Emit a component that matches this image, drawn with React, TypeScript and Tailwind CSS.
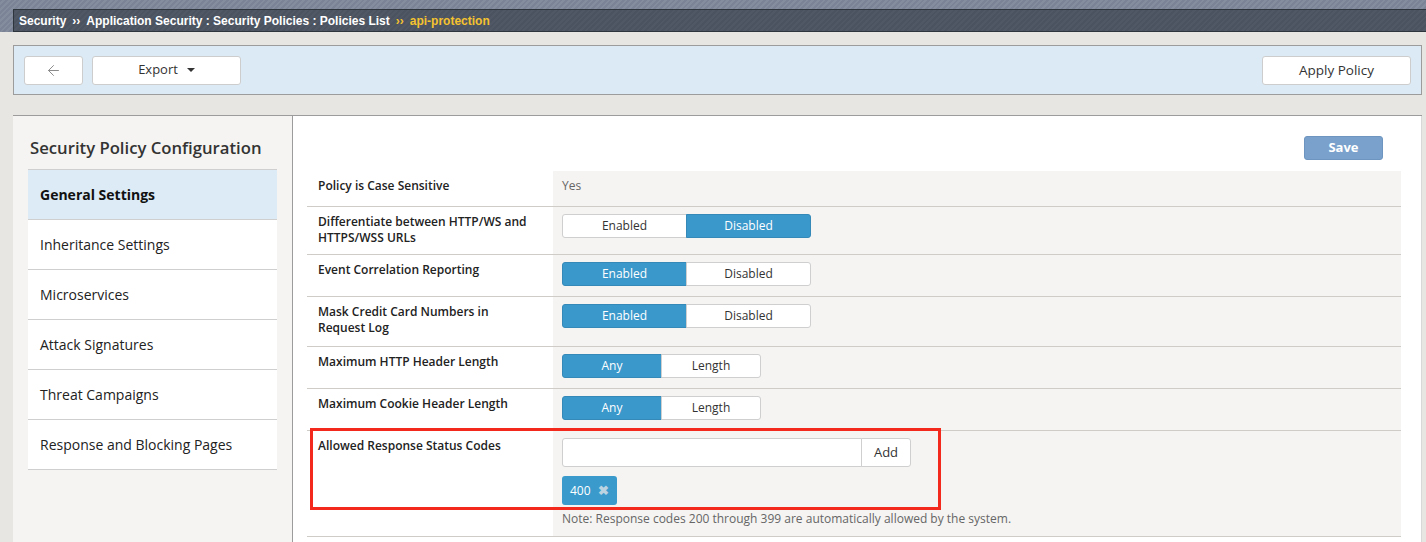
import { ArrowLeft } from "lucide-react";

const menu = [
  { label: "General Settings", active: true },
  { label: "Inheritance Settings" },
  { label: "Microservices" },
  { label: "Attack Signatures" },
  { label: "Threat Campaigns" },
  { label: "Response and Blocking Pages" },
];

type Row = {
  label: string;
  height: string;
  options?: string[];
  active?: number;
  wide?: boolean;
  text?: string;
};

const rows: Row[] = [
  { label: "Policy is Case Sensitive", height: "h-[35px]", text: "Yes" },
  {
    label: "Differentiate between HTTP/WS and HTTPS/WSS URLs",
    height: "h-[48px]",
    options: ["Enabled", "Disabled"],
    active: 1,
    wide: true,
  },
  {
    label: "Event Correlation Reporting",
    height: "h-[42px]",
    options: ["Enabled", "Disabled"],
    active: 0,
    wide: true,
  },
  {
    label: "Mask Credit Card Numbers in Request Log",
    height: "h-[50px]",
    options: ["Enabled", "Disabled"],
    active: 0,
    wide: true,
  },
  {
    label: "Maximum HTTP Header Length",
    height: "h-[42px]",
    options: ["Any", "Length"],
    active: 0,
  },
  {
    label: "Maximum Cookie Header Length",
    height: "h-[42px]",
    options: ["Any", "Length"],
    active: 0,
  },
];

function Toggle({ options, active, wide }: { options: string[]; active: number; wide?: boolean }) {
  return (
    <div className="flex">
      {options.map((opt, i) => (
        <div
          key={opt}
          className={`h-[24px] flex items-center justify-center text-[12px] border ${
            wide ? "w-[125px]" : "w-[100px]"
          } ${i === 0 ? "rounded-l-[3px]" : "rounded-r-[3px] -ml-px"} ${
            i === active
              ? "bg-[#3a98cb] border-[#3589b8] text-white"
              : "bg-white border-[#cfcfcf] text-[#333]"
          }`}
        >
          {opt}
        </div>
      ))}
    </div>
  );
}

export default function App() {
  return (
    <div className="w-[1426px] h-[542px] overflow-hidden bg-[#e8e6e2] font-['Open_Sans',sans-serif] text-[#222]">
      {/* breadcrumb */}
      <div className="h-[32px] pt-[9px] pl-[13px] bg-[repeating-linear-gradient(135deg,#7a8496_0px,#7a8496_2px,#838d9e_2px,#838d9e_4px)]">
        <div className="h-[23px] border border-[#2f353d] border-r-0 bg-[repeating-linear-gradient(135deg,#4a535f_0px,#4a535f_2px,#4f5864_2px,#4f5864_4px)] flex items-center pl-[5px] font-['Liberation_Sans',Arial,sans-serif] font-bold text-[12px] text-white">
          <span>Security</span>
          <span className="mx-[6px]">››</span>
          <span>Application Security : Security Policies : Policies List</span>
          <span className="mx-[6px] text-[#f5c230]">››</span>
          <span className="text-[#f5c230]">api-protection</span>
        </div>
      </div>

      {/* toolbar */}
      <div className="mt-[13px] ml-[13px] mr-[4px] h-[50px] border border-[#9c9c9c] bg-[#dbeaf5] flex items-center justify-between px-[10px]">
        <div className="flex gap-[9px]">
          <div className="w-[59px] h-[29px] bg-white border border-[#cdcdcd] rounded-[3px] flex items-center justify-center text-[#8a8a8a]">
            <ArrowLeft size={17} strokeWidth={1.4} />
          </div>
          <div className="w-[149px] h-[29px] bg-white border border-[#cdcdcd] rounded-[3px] flex items-center justify-center text-[13px] text-[#333]">
            Export
            <span className="ml-[9px] w-0 h-0 border-l-[4px] border-r-[4px] border-t-[4px] border-l-transparent border-r-transparent border-t-[#333]" />
          </div>
        </div>
        <div className="w-[149px] h-[29px] bg-white border border-[#cdcdcd] rounded-[3px] flex items-center justify-center text-[13.5px] text-[#333]">
          Apply Policy
        </div>
      </div>

      {/* main */}
      <div className="mt-[20px] ml-[13px] mr-[4px] h-[430px] border-t border-[#9c9c9c] flex">
        <div className="w-[280px] shrink-0 bg-[#f5f4f2] border-r border-[#9c9c9c] px-[15px] pt-[21px]">
          <div className="pl-[2px] text-[16.7px] font-semibold text-[#333] leading-[22px] mb-[10px]">
            Security Policy Configuration
          </div>
          <div className="border-t border-[#cfcfcf]">
            {menu.map((m) => (
              <div
                key={m.label}
                className={`h-[50px] border-b border-[#cfcfcf] flex items-center pl-[12px] text-[14px] ${
                  m.active ? "bg-[#dcebf6] font-bold text-[#111]" : "bg-white text-[#222]"
                }`}
              >
                {m.label}
              </div>
            ))}
          </div>
        </div>

        <div className="flex-1 bg-white border-r border-[#d8d8d8] pl-[14px] pr-[20px] pt-[20px]">
          <div className="flex justify-end pr-[18px]">
            <div className="w-[79px] h-[24px] bg-[#7aa1cc] border border-[#6e95c0] rounded-[3px] text-white text-[13px] font-bold flex items-center justify-center">
              Save
            </div>
          </div>

          <div className="mt-[11px]">
            {rows.map((r, idx) => (
              <div key={idx} className={`flex ${r.height} ${idx > 0 ? "border-t border-[#cfccc8]" : ""}`}>
                <div className="w-[246px] shrink-0 pl-[11px] pr-[20px] pt-[7px] text-[12px] font-semibold leading-[16px] text-[#222]">
                  {r.label}
                </div>
                <div className="flex-1 bg-[#f5f4f2] pl-[9px] pt-[7px]">
                  {r.text ? (
                    <div className="text-[12px] text-[#666] leading-[16px]">{r.text}</div>
                  ) : (
                    <Toggle options={r.options!} active={r.active!} wide={r.wide} />
                  )}
                </div>
              </div>
            ))}

            <div className="relative flex h-[107px] border-t border-b border-[#cfccc8]">
              <div className="w-[246px] shrink-0 pl-[11px] pt-[7px] text-[12px] font-semibold leading-[16px] text-[#222]">
                Allowed Response Status Codes
              </div>
              <div className="flex-1 bg-[#f5f4f2] pl-[9px] pt-[7px]">
                <div className="flex">
                  <div className="w-[300px] h-[29px] bg-white border border-[#cfcfcf] rounded-l-[3px]" />
                  <div className="w-[50px] h-[29px] -ml-px bg-white border border-[#cfcfcf] rounded-r-[3px] flex items-center justify-center text-[13px] text-[#333]">
                    Add
                  </div>
                </div>
                <div className="mt-[9px] w-[55px] h-[29px] bg-[#3a9acc] rounded-[3px] flex items-center pl-[8px] text-[12px] text-white">
                  400
                  <span className="ml-[7px] text-[13px] font-bold text-[#bcd4e2]">✖</span>
                </div>
                <div className="mt-[6px] text-[12px] text-[#666] leading-[16px]">
                  Note: Response codes 200 through 399 are automatically allowed by the system.
                </div>
              </div>
              <div className="absolute left-[3px] top-[-3px] w-[631px] h-[82px] border-[3px] border-[#f2291c]" />
            </div>
          </div>
        </div>
      </div>
    </div>
  );
}
